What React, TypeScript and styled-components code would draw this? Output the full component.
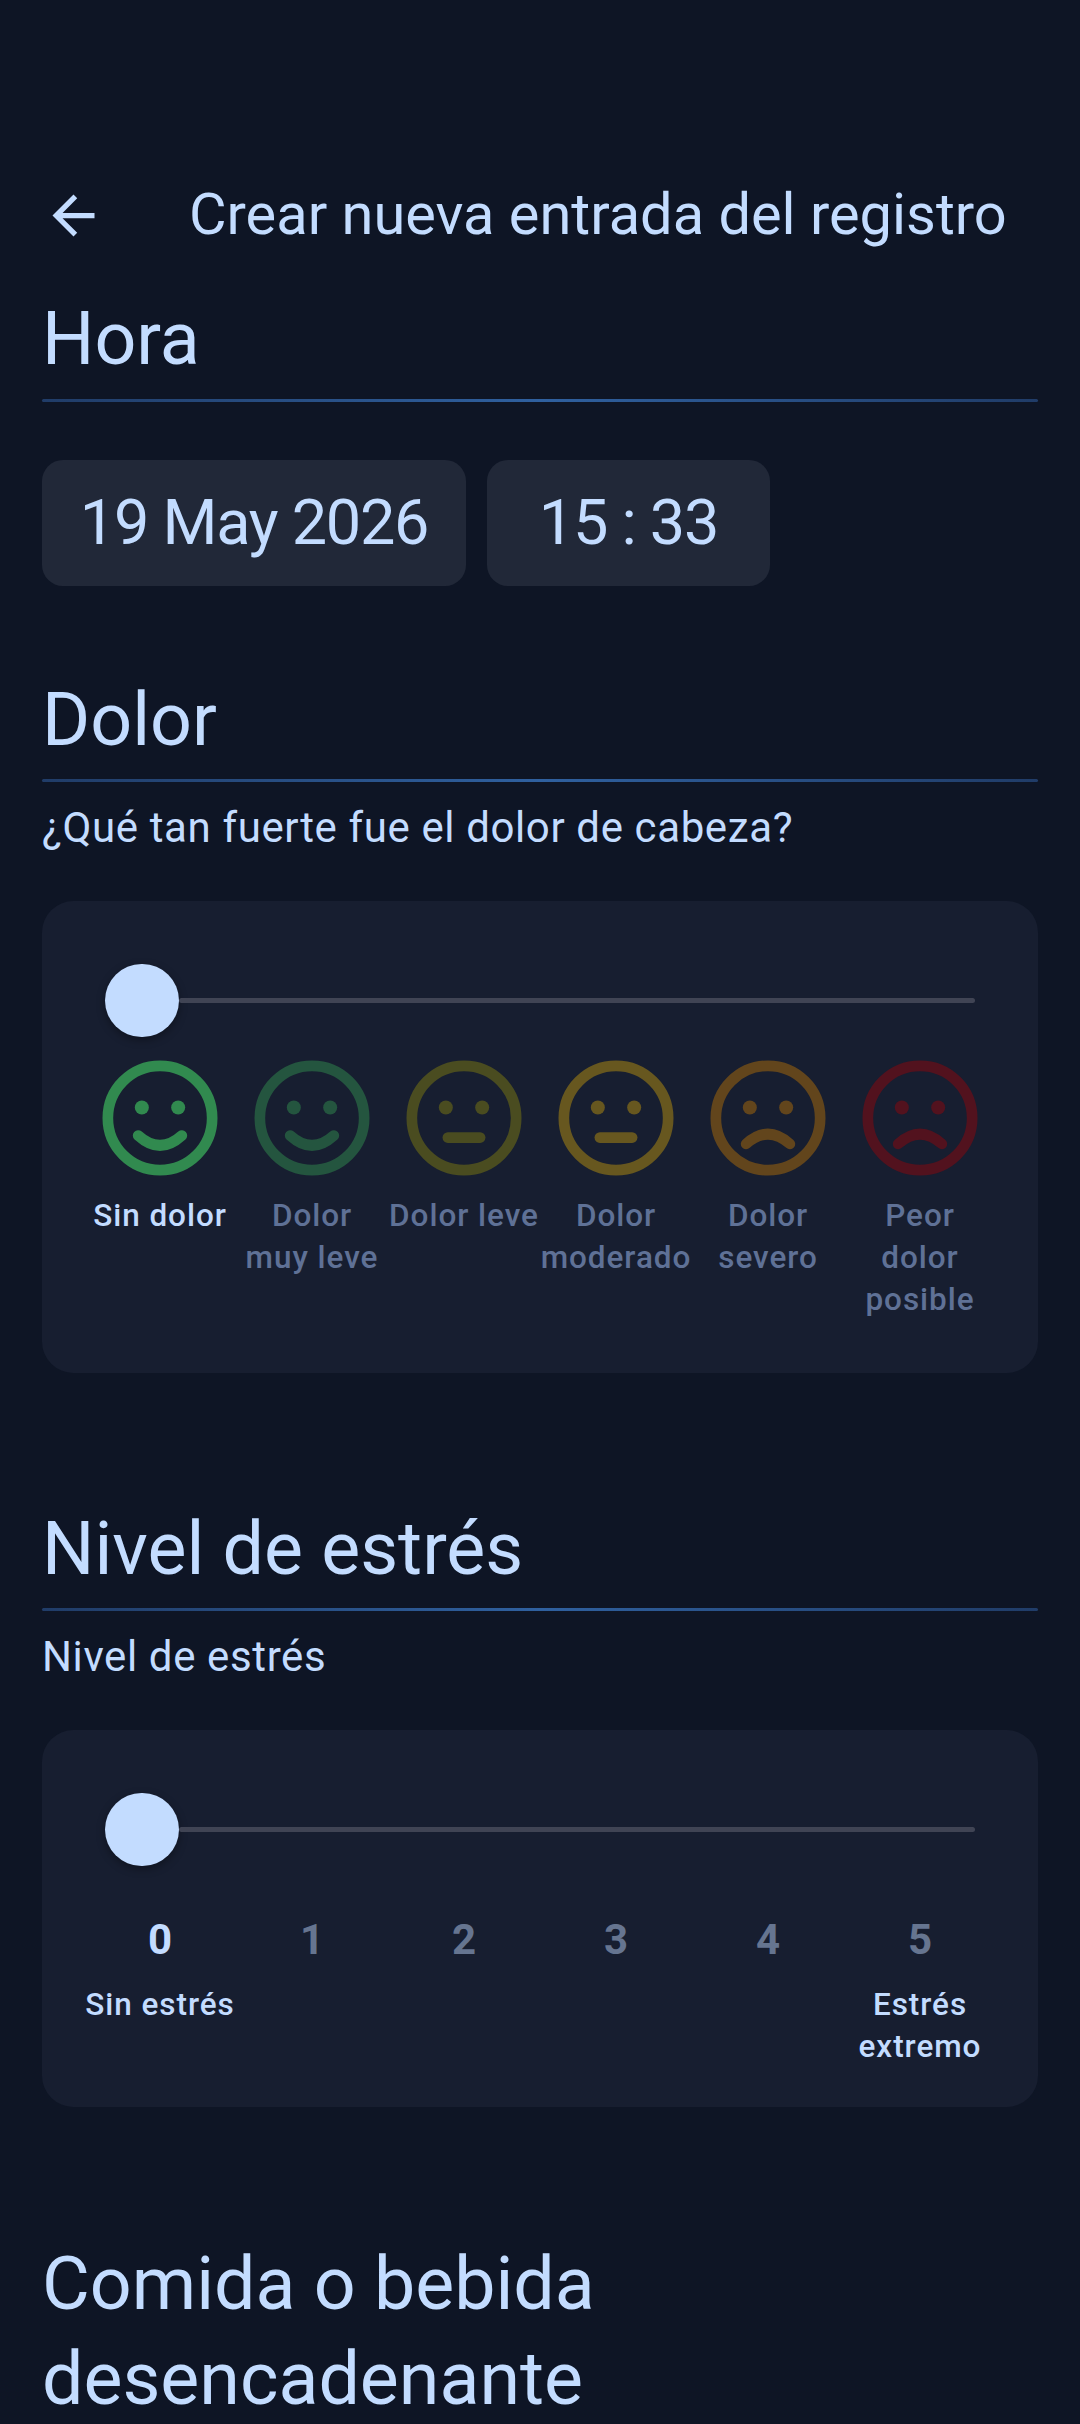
import React from 'react';
import styled, { createGlobalStyle } from 'styled-components';

const GlobalStyle = createGlobalStyle`
  html, body {
    margin: 0;
    padding: 0;
    height: 2424px;
    overflow: hidden;
    background: #0e1525;
  }

  body {
    font-family: Roboto, 'Liberation Sans', sans-serif;
    color: #c3dcff;
  }
`;

const StyledPage = styled.div`
  width: 1080px;
  height: 2424px;
  overflow: hidden;
`;

const StyledTopBar = styled.header`
  display: flex;
  align-items: center;
  height: 126px;
  padding: 152px 42px 0;
`;

const StyledBack = styled.div`
  display: flex;
  width: 147px;
  flex-shrink: 0;

  svg {
    width: 63px;
    height: 63px;
    fill: #c3dcff;
  }
`;

const StyledTitle = styled.h1`
  margin: 0;
  font-size: 57.75px;
  line-height: 73.5px;
  font-weight: 400;
  white-space: nowrap;
`;

const StyledContent = styled.main`
  padding: 12px 42px 0;
`;

const StyledSection = styled.section<{ $gap: number }>`
  margin-bottom: ${(p) => p.$gap}px;
`;

const StyledHeading = styled.h2`
  margin: 0;
  padding-top: 2px;
  font-size: 73.5px;
  line-height: 94.5px;
  font-weight: 400;
`;

const StyledDivider = styled.hr`
  margin: 12px 0 0;
  height: 3px;
  border: 0;
  border-radius: 2px;
  background: linear-gradient(90deg, #203c68 0%, #2f609f 50%, #203c68 100%);
`;

const StyledChips = styled.div`
  display: flex;
  gap: 21px;
  margin-top: 58px;
`;

const StyledChip = styled.div<{ $width: number }>`
  display: flex;
  align-items: center;
  justify-content: center;
  width: ${(p) => p.$width}px;
  height: 126px;
  border-radius: 21px;
  background: #212838;
  font-size: 63px;
  letter-spacing: -1.25px;
`;

const StyledPrompt = styled.p`
  margin: 13.5px 0 0;
  font-size: 42px;
  line-height: 63px;
  letter-spacing: 0.62px;
`;

const StyledCard = styled.div<{ $bottom: number }>`
  margin-top: 42px;
  padding: 63px 42px ${(p) => p.$bottom}px;
  border-radius: 31.5px;
  background: #171e30;
`;

const StyledSlider = styled.div`
  display: flex;
  align-items: center;
  margin: 0 -21px;
  padding: 0 42px 0 42px;
`;

const StyledThumb = styled.div`
  flex-shrink: 0;
  width: 73.5px;
  height: 73.5px;
  border-radius: 50%;
  background: #c3dcff;
  box-shadow: 0 3px 8px rgba(0, 0, 0, 0.35);
`;

const StyledTrack = styled.div`
  flex: 1;
  height: 5.25px;
  border-radius: 3px;
  background: #404454;
`;

const StyledScale = styled.div<{ $top: number }>`
  display: grid;
  grid-template-columns: repeat(6, 152px);
  margin-top: ${(p) => p.$top}px;
`;

const StyledStep = styled.div`
  display: flex;
  flex-direction: column;
  align-items: center;
`;

const StyledFaceIcon = styled.svg<{ $color: string }>`
  display: block;
  width: 138px;
  height: 138px;
  margin-bottom: 8.5px;
  fill: none;
  stroke: ${(p) => p.$color};
  stroke-linecap: round;

  circle.eye {
    fill: ${(p) => p.$color};
    stroke: none;
  }
`;

const StyledLabel = styled.div<{ $active?: boolean }>`
  font-size: 31.5px;
  line-height: 42px;
  font-weight: 500;
  letter-spacing: 0.95px;
  text-align: center;
  color: ${(p) => (p.$active ? '#c3dcff' : '#5f7196')};
`;

const StyledNumber = styled.div<{ $active?: boolean }>`
  font-size: 42px;
  line-height: 63px;
  font-weight: 700;
  color: ${(p) => (p.$active ? '#c3dcff' : '#667590')};
`;

const StyledCaption = styled.div`
  min-height: 84px;
  margin-top: 13.5px;
  font-size: 31.5px;
  line-height: 42px;
  font-weight: 500;
  letter-spacing: 0.95px;
  text-align: center;
`;

type Mood = 'happy' | 'neutral' | 'sad';

const mouths: Record<Mood, string> = {
  happy: 'M8.2 15.05Q12 18.5 15.8 15.05',
  neutral: 'M9.2 15.4H14.8',
  sad: 'M8.2 16.5Q12 13.1 15.8 16.5',
};

const FaceIcon = ({ mood, color }: { mood: Mood; color: string }) => (
  <StyledFaceIcon
    viewBox="0 0 24 24"
    $color={color}
  >
    <circle
      cx="12"
      cy="12"
      r="9.07"
      strokeWidth="1.86"
    />
    <circle
      className="eye"
      cx="8.84"
      cy="10.17"
      r="1.22"
    />
    <circle
      className="eye"
      cx="15.16"
      cy="10.17"
      r="1.22"
    />
    <path
      d={mouths[mood]}
      strokeWidth="1.86"
    />
  </StyledFaceIcon>
);

const painSteps: { label: React.ReactNode; mood: Mood; color: string }[] = [
  { label: 'Sin dolor', mood: 'happy', color: '#318a4f' },
  { label: <>Dolor<br />muy leve</>, mood: 'happy', color: '#24553f' },
  { label: 'Dolor leve', mood: 'neutral', color: '#4a4c20' },
  { label: 'Dolor moderado', mood: 'neutral', color: '#67571f' },
  { label: 'Dolor severo', mood: 'sad', color: '#62451c' },
  { label: 'Peor dolor posible', mood: 'sad', color: '#52121e' },
];

const stressCaptions: Record<number, string> = {
  0: 'Sin estrés',
  5: 'Estrés extremo',
};

const Slider = () => (
  <StyledSlider>
    <StyledThumb />
    <StyledTrack />
  </StyledSlider>
);

const App: React.FunctionComponent = () => {
  return (
    <StyledPage>
      <GlobalStyle />
      <StyledTopBar>
        <StyledBack>
          <svg viewBox="0 0 24 24">
            <path d="M20 11H7.83l5.59-5.59L12 4l-8 8 8 8 1.41-1.41L7.83 13H20v-2z" />
          </svg>
        </StyledBack>
        <StyledTitle>Crear nueva entrada del registro</StyledTitle>
      </StyledTopBar>
      <StyledContent>
        <StyledSection $gap={85}>
          <StyledHeading>Hora</StyledHeading>
          <StyledDivider />
          <StyledChips>
            <StyledChip $width={424}>19 May 2026</StyledChip>
            <StyledChip $width={283}>15 : 33</StyledChip>
          </StyledChips>
        </StyledSection>

        <StyledSection $gap={127}>
          <StyledHeading>Dolor</StyledHeading>
          <StyledDivider />
          <StyledPrompt>¿Qué tan fuerte fue el dolor de cabeza?</StyledPrompt>
          <StyledCard $bottom={51.5}>
            <Slider />
            <StyledScale $top={11.5}>
              {painSteps.map((step, index) => (
                <StyledStep key={index}>
                  <FaceIcon
                    mood={step.mood}
                    color={step.color}
                  />
                  <StyledLabel $active={index === 0}>{step.label}</StyledLabel>
                </StyledStep>
              ))}
            </StyledScale>
          </StyledCard>
        </StyledSection>

        <StyledSection $gap={128}>
          <StyledHeading>Nivel de estrés</StyledHeading>
          <StyledDivider />
          <StyledPrompt>Nivel de estrés</StyledPrompt>
          <StyledCard $bottom={39}>
            <Slider />
            <StyledScale $top={41.5}>
              {[0, 1, 2, 3, 4, 5].map((value) => (
                <StyledStep key={value}>
                  <StyledNumber $active={value === 0}>{value}</StyledNumber>
                  <StyledCaption>{stressCaptions[value]}</StyledCaption>
                </StyledStep>
              ))}
            </StyledScale>
          </StyledCard>
        </StyledSection>

        <StyledHeading>Comida o bebida desencadenante</StyledHeading>
      </StyledContent>
    </StyledPage>
  );
};

export default App;
